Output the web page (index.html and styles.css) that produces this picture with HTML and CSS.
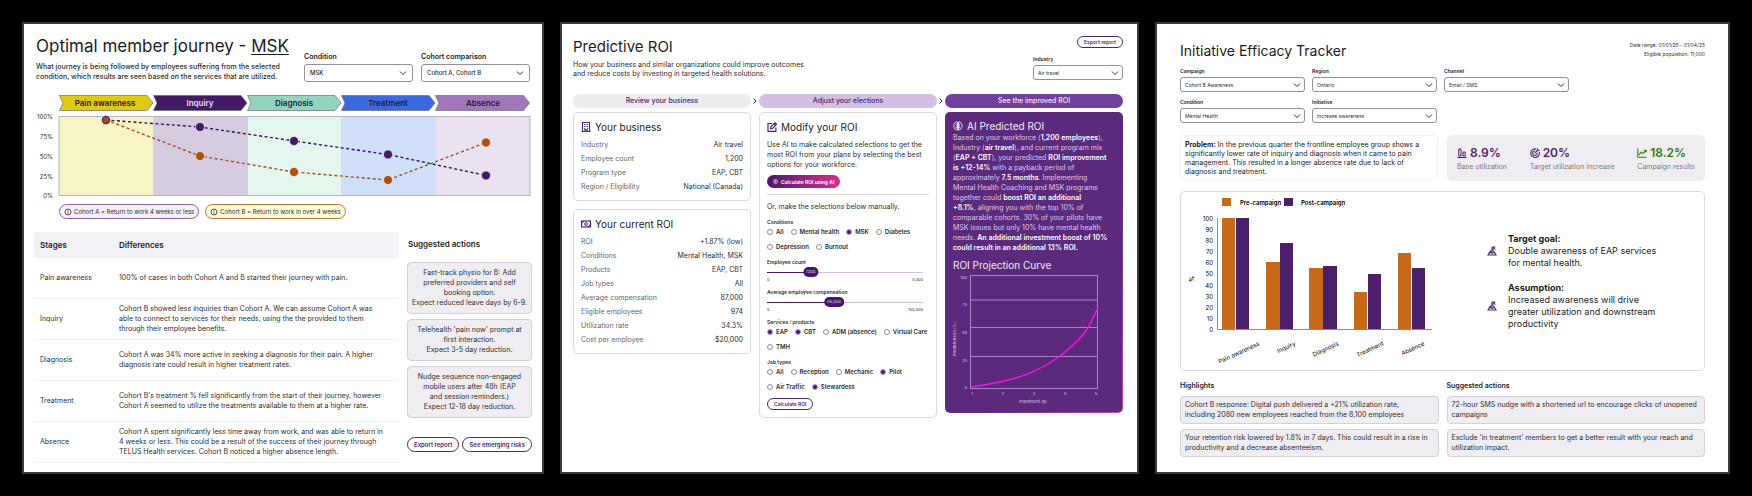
FILE: index.html
```html
<!DOCTYPE html>
<html lang="en">
<head>
  <meta charset="UTF-8">
  <title>Member health dashboards</title>
  <link rel="stylesheet" href="styles.css">
</head>
<body>
<svg class="defs" aria-hidden="true">
  <symbol id="chevron" viewBox="0 0 8 8"><path d="M1 2.5 4 5.5 7 2.5" fill="none" stroke="currentColor" stroke-width="1"/></symbol>
  <symbol id="next" viewBox="0 0 8 8"><path d="M2.5 1.5 5 4 2.5 6.5" fill="none" stroke="#333" stroke-width="1"/></symbol>
  <symbol id="info" viewBox="0 0 8 8"><circle cx="4" cy="4" r="3" fill="none" stroke="#2c2e30" stroke-width=".8"/><path d="M4 3.6V5.8M4 2.1V2.9" stroke="#2c2e30" stroke-width=".8"/></symbol>
  <symbol id="brain" viewBox="0 0 10 10"><path d="M4.4 1C3.4.6 2.6 1.1 2.4 2 1.3 2.2.9 3.2 1.2 4 .3 4.8.5 6.2 1.4 6.6 1.3 7.7 2.2 8.3 3 8.2 3.3 9 4 9.2 4.4 9ZM5.6 1C6.6.6 7.4 1.1 7.6 2 8.7 2.2 9.1 3.2 8.8 4 9.7 4.8 9.5 6.2 8.6 6.6 8.7 7.7 7.8 8.3 7 8.2 6.7 9 6 9.2 5.6 9ZM3 4h1M2.7 6.2H4M6 4h1M6 6.2h1.3" fill="none" stroke="currentColor" stroke-width="1"/></symbol>
  <symbol id="goal" viewBox="0 0 10 10"><path d="M1 9 3.4 5h3.2L9 9ZM5 5.2V1M5 1h2.6L6.8 2l.8 1H5M2.6 7.2l1.6-1 1 1.2 1.4-.9" fill="none" stroke="#4b286d" stroke-width="1.2"/></symbol>
</svg>
<main class="boards">

  <section class="board journey">
    <header class="journey-head">
      <div>
        <h1>Optimal member journey - <u>MSK</u></h1>
        <p>What journey is being followed by employees suffering from the selected<br>condition, which results are seen based on the services that are utilized.</p>
      </div>
      <div class="filters">
        <div class="field">
          <label for="j-condition">Condition</label>
          <div class="select"><select id="j-condition"><option>MSK</option></select><svg><use href="#chevron"/></svg></div>
        </div>
        <div class="field">
          <label for="j-cohort">Cohort comparison</label>
          <div class="select"><select id="j-cohort"><option>Cohort A, Cohort B</option></select><svg><use href="#chevron"/></svg></div>
        </div>
      </div>
    </header>

    <svg class="journey-chart" viewBox="0 0 498 106" role="img" aria-label="Cohort journey by stage">
      <g stroke="#6b6b70" stroke-width=".7">
        <path d="M25.5.5H113L119 8 113 15.5H25.5L29 8Z" fill="#e0c912"/>
        <path d="M119.5.5H207L213 8 207 15.5H119.5L123 8Z" fill="#421b64"/>
        <path d="M213.5.5H301L307 8 301 15.5H213.5L217 8Z" fill="#92d4bd"/>
        <path d="M307.5.5H395L401 8 395 15.5H307.5L311 8Z" fill="#3a6ade"/>
        <path d="M401.5.5H489.5L495.5 8 489.5 15.5H401.5L405 8Z" fill="#a077ba"/>
      </g>
      <g class="stage-names">
        <text x="71" y="11">Pain awareness</text>
        <text x="166" y="11" class="light">Inquiry</text>
        <text x="260" y="11">Diagnosis</text>
        <text x="354" y="11">Treatment</text>
        <text x="449" y="11">Absence</text>
      </g>
      <rect x="25" y="22" width="94" height="79" fill="#f7f5c5"/>
      <rect x="119" y="22" width="95" height="79" fill="#d6cce0"/>
      <rect x="214" y="22" width="93" height="79" fill="#e5f6ef"/>
      <rect x="307" y="22" width="95" height="79" fill="#cfe0f8"/>
      <rect x="402" y="22" width="94" height="79" fill="#eae2f0"/>
      <rect x="25" y="21.5" width="471" height="79" fill="none" stroke="#b4b4be"/>
      <g class="ticks">
        <text x="19" y="24">100%</text>
        <text x="19" y="44">75%</text>
        <text x="19" y="64">50%</text>
        <text x="19" y="84">25%</text>
        <text x="19" y="103">0%</text>
      </g>
      <g fill="none" stroke-width="1.4" stroke-dasharray="3 2.5">
        <path d="M72 25 166 32 260 46 354 59.5 452 80.5" stroke="#32145a"/>
        <path d="M72 25 166 61 260 77 354 85 452 47.5" stroke="#a2501c"/>
      </g>
      <g fill="#421b64" stroke="#fff" stroke-opacity=".6" stroke-width="1">
        <circle cx="72" cy="25" r="4.5"/><circle cx="166" cy="32" r="4.5"/><circle cx="260" cy="46" r="4.5"/><circle cx="354" cy="59.5" r="4.5"/><circle cx="452" cy="80.5" r="4.5"/>
      </g>
      <g fill="#b04f0c" stroke="#fff" stroke-opacity=".6" stroke-width="1">
        <circle cx="72" cy="25" r="3" stroke="none"/><circle cx="166" cy="61" r="4.5"/><circle cx="260" cy="77" r="4.5"/><circle cx="354" cy="85" r="4.5"/><circle cx="452" cy="47.5" r="4.5"/>
      </g>
    </svg>

    <div class="cohorts">
      <span class="cohort cohort-a"><svg><use href="#info"/></svg>Cohort A = Return to work 4 weeks or less</span>
      <span class="cohort cohort-b"><svg><use href="#info"/></svg>Cohort B = Return to work in over 4 weeks</span>
    </div>

    <div class="journey-body">
      <table class="stages">
        <thead>
          <tr><th>Stages</th><th>Differences</th></tr>
        </thead>
        <tbody>
          <tr><td>Pain awareness</td><td>100% of cases in both Cohort A and B started their journey with pain.</td></tr>
          <tr><td>Inquiry</td><td>Cohort B showed less inquiries than Cohort A. We can assume Cohort A was<br>able to connect to services for their needs, using the the provided to them<br>through their employee benefits.</td></tr>
          <tr><td>Diagnosis</td><td>Cohort A was 34% more active in seeking a diagnosis for their pain. A higher<br>diagnosis rate could result in higher treatment rates.</td></tr>
          <tr><td>Treatment</td><td>Cohort B's treatment % fell significantly from the start of their journey, however<br>Cohort A seemed to utilize the treatments available to them at a higher rate.</td></tr>
          <tr><td>Absence</td><td>Cohort A spent significantly less time away from work, and was able to return in<br>4 weeks or less. This could be a result of the success of their journey through<br>TELUS Health services. Cohort B noticed a higher absence length.</td></tr>
        </tbody>
      </table>
      <aside class="actions">
        <h2>Suggested actions</h2>
        <p class="note">Fast-track physio for B: Add<br>preferred providers and self<br>booking option.<br>Expect reduced leave days by 6-9.</p>
        <p class="note">Telehealth 'pain now' prompt at<br>first interaction.<br>Expect 3-5 day reduction.</p>
        <p class="note">Nudge sequence non-engaged<br>mobile users after 48h (EAP<br>and session reminders.)<br>Expect 12-18 day reduction.</p>
        <div class="buttons">
          <button class="btn">Export report</button>
          <button class="btn">See emerging risks</button>
        </div>
      </aside>
    </div>
  </section>

  <section class="board roi">
    <header class="roi-head">
      <div>
        <h1>Predictive ROI</h1>
        <p>How your business and similar organizations could improve outcomes<br>and reduce costs by investing in targeted health solutions.</p>
      </div>
      <div class="roi-tools">
        <button class="btn small">Export report</button>
        <div class="field compact">
          <label for="r-industry">Industry</label>
          <div class="select"><select id="r-industry"><option>Air travel</option></select><svg><use href="#chevron"/></svg></div>
        </div>
      </div>
    </header>

    <div class="steps">
      <span class="step step-1">Review your business</span>
      <svg><use href="#next"/></svg>
      <span class="step step-2">Adjust your elections</span>
      <svg><use href="#next"/></svg>
      <span class="step step-3">See the improved ROI</span>
    </div>

    <div class="roi-cols">
      <div class="stack">
        <div class="card">
          <h2><svg viewBox="0 0 10 10"><path d="M1.5 9.5V.5h7v9M.5 9.5h9M4 9.5V7.5h2v2" fill="none" stroke="#4b286d" stroke-width="1.2"/><path d="M3.5 2v1M5 2v1M6.5 2v1M3.5 4v1M5 4v1M6.5 4v1M3.5 6v1M6.5 6v1" stroke="#4b286d" stroke-width=".9"/></svg>Your business</h2>
          <dl>
            <div><dt>Industry</dt><dd>Air travel</dd></div>
            <div><dt>Employee count</dt><dd>1,200</dd></div>
            <div><dt>Program type</dt><dd>EAP, CBT</dd></div>
            <div><dt>Region / Eligibility</dt><dd>National (Canada)</dd></div>
          </dl>
        </div>
        <div class="card">
          <h2><svg viewBox="0 0 10 10"><rect x=".6" y="2" width="8.8" height="6" fill="none" stroke="#4b286d" stroke-width="1.2"/><circle cx="5" cy="5" r="1.4" fill="none" stroke="#4b286d"/><path d="M1 4.2 3 2M9 5.8 7 8" stroke="#4b286d"/></svg>Your current ROI</h2>
          <dl>
            <div><dt>ROI</dt><dd>+1.87% (low)</dd></div>
            <div><dt>Conditions</dt><dd>Mental Health, MSK</dd></div>
            <div><dt>Products</dt><dd>EAP, CBT</dd></div>
            <div><dt>Job types</dt><dd>All</dd></div>
            <div><dt>Average compensation</dt><dd>87,000</dd></div>
            <div><dt>Eligible employees</dt><dd>974</dd></div>
            <div><dt>Utilization rate</dt><dd>34.3%</dd></div>
            <div><dt>Cost per employee</dt><dd>$20,000</dd></div>
          </dl>
        </div>
      </div>

      <form class="card modify">
        <h2><svg viewBox="0 0 10 10"><path d="M5 1.5H1v7.9h7.9V5.5M3.6 6.8l.3-2L8 .8l1.5 1.5-4 4.1ZM7 1.8l1.4 1.4" fill="none" stroke="#4b286d" stroke-width="1.2"/></svg>Modify your ROI</h2>
        <p>Use AI to make calculated selections to get the<br>most ROI from your plans by selecting the best<br>options for your workforce.</p>
        <button type="button" class="ai-btn"><svg><use href="#brain"/></svg>Calculate ROI using AI</button>
        <hr>
        <p class="manual">Or, make the selections below manually.</p>
        <fieldset>
          <legend>Conditions</legend>
          <label><input type="radio" name="condition">All</label>
          <label><input type="radio" name="condition">Mental health</label>
          <label><input type="radio" name="condition" checked>MSK</label>
          <label><input type="radio" name="condition">Diabetes</label>
          <label><input type="radio" name="condition">Depression</label>
          <label><input type="radio" name="condition">Burnout</label>
        </fieldset>
        <div class="slider count">
          <label for="count">Employee count</label>
          <div class="track"><input id="count" type="range" min="0" max="5000" value="1200"><output for="count">1200</output></div>
          <div class="ends"><span>0</span><span>5,000</span></div>
        </div>
        <div class="slider pay">
          <label for="pay">Average employee compensation</label>
          <div class="track"><input id="pay" type="range" min="0" max="150000" value="65000"><output for="pay">65,000</output></div>
          <div class="ends"><span>0</span><span>150,000</span></div>
        </div>
        <fieldset>
          <legend>Services / products</legend>
          <label><input type="checkbox" checked>EAP</label>
          <label><input type="checkbox" checked>CBT</label>
          <label><input type="checkbox">ADM (absence)</label>
          <label><input type="checkbox">Virtual Care</label>
          <label><input type="checkbox">TMH</label>
        </fieldset>
        <fieldset>
          <legend>Job types</legend>
          <label><input type="checkbox">All</label>
          <label><input type="checkbox">Reception</label>
          <label><input type="checkbox">Mechanic</label>
          <label><input type="checkbox" checked>Pilot</label>
          <label><input type="checkbox">Air Traffic</label>
          <label><input type="checkbox" checked>Stewardess</label>
        </fieldset>
        <button type="button" class="btn small">Calculate ROI</button>
      </form>

      <div class="predicted">
        <h2><svg><use href="#brain"/></svg>AI Predicted ROI</h2>
        <p>Based on your workforce (<b>1,200 employees</b>),<br>Industry (<b>air travel</b>), and current program mix<br>(<b>EAP + CBT</b>), your predicted <b>ROI improvement<br>is +12-14%</b> with a payback period of<br>approximately <b>7.5 months</b>. Implementing<br>Mental Health Coaching and MSK programs<br>together could <b>boost ROI an additional<br>+8.1%</b>, aligning you with the top 10% of<br>comparable cohorts. 30% of your pilots have<br>MSK issues but only 10% have mental health<br>needs. <b>An additional investment boost of 10%<br>could result in an additional 13% ROI.</b></p>
        <h2>ROI Projection Curve</h2>
        <svg class="curve" viewBox="0 0 162 134" role="img" aria-label="ROI projection curve">
          <g fill="none" stroke="#a883c6" stroke-width="1">
            <rect x="17.5" y="3.5" width="127" height="113"/>
            <path d="M17.5 28H144.5M17.5 55.5H144.5M17.5 84.5H144.5"/>
          </g>
          <path d="M18 115C60 109 85 102 112 80S138 48 145 36" fill="none" stroke="#e815dd" stroke-width="1.6"/>
          <g class="curve-y">
            <text x="14" y="7">100</text>
            <text x="14" y="34">75</text>
            <text x="14" y="62">50</text>
            <text x="14" y="90">25</text>
            <text x="14" y="117">0</text>
          </g>
          <g class="curve-x">
            <text x="19" y="123">1</text>
            <text x="50" y="123">2</text>
            <text x="81" y="123">3</text>
            <text x="112" y="123">4</text>
            <text x="143" y="123">5</text>
            <text x="80" y="131">Investment ($)</text>
            <text transform="translate(3 67) rotate(-90)">Predicted ROI (%)</text>
          </g>
        </svg>
      </div>
    </div>
  </section>

  <section class="board tracker">
    <header class="tracker-head">
      <h1>Initiative Efficacy Tracker</h1>
      <p>Date range: 01/01/25 - 01/04/25<br>Eligible population: 11,000</p>
    </header>

    <div class="tracker-filters">
      <div class="field compact">
        <label for="t-campaign">Campaign</label>
        <div class="select"><select id="t-campaign"><option>Cohort B Awareness</option></select><svg><use href="#chevron"/></svg></div>
      </div>
      <div class="field compact">
        <label for="t-region">Region</label>
        <div class="select"><select id="t-region"><option>Ontario</option></select><svg><use href="#chevron"/></svg></div>
      </div>
      <div class="field compact">
        <label for="t-channel">Channel</label>
        <div class="select"><select id="t-channel"><option>Email / SMS</option></select><svg><use href="#chevron"/></svg></div>
      </div>
      <div class="field compact">
        <label for="t-condition">Condition</label>
        <div class="select"><select id="t-condition"><option>Mental Health</option></select><svg><use href="#chevron"/></svg></div>
      </div>
      <div class="field compact">
        <label for="t-initiative">Initiative</label>
        <div class="select"><select id="t-initiative"><option>Increase awareness</option></select><svg><use href="#chevron"/></svg></div>
      </div>
    </div>

    <div class="summary">
      <p class="problem"><b>Problem:</b> In the previous quarter the frontline employee group shows a<br>significantly lower rate of inquiry and diagnosis when it came to pain<br>management. This resulted in a longer absence rate due to lack of<br>diagnosis and treatment.</p>
      <div class="stats">
        <div class="stat"><strong><svg viewBox="0 0 10 10"><path d="M.5 9.5h9M1.8 8V1h2.2v7ZM6 8V4h2.2v4Z" fill="none" stroke="currentColor"/></svg>8.9%</strong><span>Base utilization</span></div>
        <div class="stat"><strong><svg viewBox="0 0 10 10"><path d="M9.2 4A4.3 4.3 0 1 1 6.2 1M7 4.8A2.2 2.2 0 1 1 5 3M4.8 5.2 8 2M7.5.5v2h2" fill="none" stroke="currentColor" stroke-width="1.1"/></svg>20%</strong><span>Target utilization increase</span></div>
        <div class="stat up"><strong><svg viewBox="0 0 10 10"><path d="M.8.5v8.7h8.7M2 7l2.2-3 1.6 1.6L9 2.5M6.8 2.2h2.4v2.4" fill="none" stroke="currentColor" stroke-width="1.1"/></svg>18.2%</strong><span>Campaign results</span></div>
      </div>
    </div>

    <div class="results">
      <svg class="bars" viewBox="0 2 257 178" role="img" aria-label="Pre-campaign and post-campaign results by stage">
        <g fill="#c66a1a">
          <rect x="41" y="8" width="9" height="8"/>
          <rect x="41" y="28" width="13" height="111"/>
          <rect x="85" y="72" width="14" height="67"/>
          <rect x="128" y="78" width="14" height="61"/>
          <rect x="173" y="102" width="13" height="37"/>
          <rect x="217" y="63" width="13" height="76"/>
        </g>
        <g fill="#4b1f69">
          <rect x="103" y="8" width="9" height="8"/>
          <rect x="55" y="28" width="13" height="111"/>
          <rect x="99" y="53" width="13" height="86"/>
          <rect x="142" y="76" width="14" height="63"/>
          <rect x="187" y="84" width="13" height="55"/>
          <rect x="231" y="78" width="13" height="61"/>
        </g>
        <path d="M36.5 28V139.5H251" fill="none" stroke="#8b8b90" stroke-width="1"/>
        <g class="legend">
          <text x="59" y="15">Pre-campaign</text>
          <text x="120" y="15">Post-campaign</text>
        </g>
        <g class="bar-ticks">
          <text x="32" y="31">100</text>
          <text x="32" y="42">90</text>
          <text x="32" y="53">80</text>
          <text x="32" y="64">70</text>
          <text x="32" y="75">60</text>
          <text x="32" y="86">50</text>
          <text x="32" y="98">40</text>
          <text x="32" y="109">30</text>
          <text x="32" y="120">20</text>
          <text x="32" y="131">10</text>
          <text x="32" y="142">0</text>
          <text class="unit" transform="translate(13 86) rotate(-90)">%</text>
          <text transform="translate(79 155) rotate(-25)">Pain awareness</text>
          <text transform="translate(115 155) rotate(-25)">Inquiry</text>
          <text transform="translate(158 155) rotate(-25)">Diagnosis</text>
          <text transform="translate(203 155) rotate(-25)">Treatment</text>
          <text transform="translate(244 155) rotate(-25)">Absence</text>
        </g>
      </svg>
      <div class="insights">
        <div class="insight"><svg><use href="#goal"/></svg><p><b>Target goal:</b><br>Double awareness of EAP services<br>for mental health.</p></div>
        <div class="insight"><svg><use href="#goal"/></svg><p><b>Assumption:</b><br>Increased awareness will drive<br>greater utilization and downstream<br>productivity</p></div>
      </div>
    </div>

    <div class="takeaways">
      <h2>Highlights</h2>
      <h2>Suggested actions</h2>
      <p class="note">Cohort B response: Digital push delivered a +21% utilization rate,<br>including 2080 new employees reached from the 8,100 employees</p>
      <p class="note">72-hour SMS nudge with a shortened url to encourage clicks of unopened<br>campaigns</p>
      <p class="note">Your retention risk lowered by 1.8% in 7 days. This could result in a rise in<br>productivity and a decrease absenteeism.</p>
      <p class="note">Exclude 'in treatment' members to get a better result with your reach and<br>utilization impact.</p>
    </div>
  </section>

</main>
</body>
</html>
```
FILE: styles.css
```css
* { box-sizing: border-box; }
body { margin: 0; background: #000; color: #2c2e30; font: 7px/10px Inter, "Liberation Sans", sans-serif; }
h1, h2, p, dl, dd, fieldset { margin: 0; padding: 0; }
h1, h2 { font-weight: 400; color: #1c1c1e; }
svg { display: block; }
.defs { position: absolute; width: 0; height: 0; }
input, select, button { font: inherit; color: inherit; }

.boards { display: grid; grid-template-columns: 522fr 579fr 575fr; gap: 16px; min-height: 100vh; padding: 22px; }
.board { min-width: 0; background: #fff; border: 2px solid #3a3a3a; }

/* form fields */
.field label { display: block; font-weight: 600; color: #1c1c1e; }
.select { display: grid; margin-top: 2px; }
.select select { grid-area: 1 / 1; width: 100%; height: 18px; padding: 0 5px; appearance: none; background: #fff; border: 1px solid #919197; border-radius: 3px; font-size: 6px; font-weight: 500; }
.select svg { grid-area: 1 / 1; justify-self: end; align-self: center; width: 8px; height: 8px; margin-right: 6px; pointer-events: none; }
.compact label { font-size: 5px; line-height: 8px; }
.compact .select select { height: 15px; font-size: 5px; font-weight: 400; padding: 0 4px; }
.compact .select svg { margin-right: 4px; }

.btn { height: 15px; padding: 0 6px; background: #fff; border: 1px solid #4b286d; border-radius: 8px; color: #4b286d; font-size: 6px; font-weight: 600; line-height: 12px; white-space: nowrap; }
.btn.small { height: 12px; font-size: 5px; line-height: 10px; }
.note { padding: 5px 4px; background: #f0edf2; border: 1px solid #d5d0da; border-radius: 4px; white-space: nowrap; }

/* journey */
.journey { padding: 11px 10px 0; }
.journey-head { display: flex; justify-content: space-between; padding: 0 2px; white-space: nowrap; }
.journey-head h1 { font-size: 17px; line-height: 22px; }
.journey-head p { margin-top: 5px; font-weight: 500; }
.journey-head u { text-underline-offset: 2px; text-decoration-thickness: 1px; }
.filters { display: grid; grid-template-columns: 109px 109px; gap: 8px; align-self: start; padding-top: 17px; }
.journey-chart { width: 100%; margin-top: 13px; }
.stage-names { font-size: 8px; font-weight: 600; fill: #2a1640; text-anchor: middle; }
.stage-names .light { fill: #e8dcf2; }
.ticks { font-size: 6px; fill: #2c2e30; text-anchor: end; }
.cohorts { display: flex; gap: 6px; margin: 3px 0 13px 25px; }
.cohort { display: flex; align-items: center; gap: 2px; height: 15px; padding: 0 4px; border: 1px solid #8a63ab; border-radius: 8px; background: #f4eff8; font-size: 6px; }
.cohort svg { width: 8px; height: 8px; }
.cohort-b { border-color: #b9773a; background: #fffbd9; }
.journey-body { display: grid; grid-template-columns: minmax(0, 365fr) minmax(0, 125fr); gap: 8px; align-items: start; }
.stages { width: 100%; border-collapse: separate; border-spacing: 0; table-layout: fixed; }
.stages th { height: 26px; padding: 0 6px; background: #f2f1f6; font-size: 8px; font-weight: 600; text-align: left; color: #1c1c1e; }
.stages td { height: 41px; padding: 0 6px; border-bottom: 1px solid #f0f0f3; white-space: nowrap; }
.stages th:first-child { width: 79px; }
.actions { display: flex; flex-direction: column; gap: 5px; }
.actions h2 { padding-left: 1px; font-size: 8px; font-weight: 600; line-height: 25px; }
.actions .note { padding: 5px 2px; text-align: center; }
.buttons { display: flex; justify-content: space-between; margin-top: 14px; }

/* predictive roi */
.roi { padding: 12px 14px 0 11px; }
.roi-head { display: flex; justify-content: space-between; height: 58px; }
.roi-head h1 { font-size: 15px; line-height: 22px; }
.roi-head p { margin-top: 2px; line-height: 9px; }
.roi-tools { display: flex; flex-direction: column; align-items: end; gap: 7px; width: 90px; }
.roi-tools .field { width: 100%; }
.steps { display: flex; align-items: center; }
.steps svg { flex: none; width: 8px; height: 8px; }
.step { flex: 1; border-radius: 7px; line-height: 14px; text-align: center; font-weight: 500; }
.step-1 { background: #eeebf1; color: #4b286d; }
.step-2 { background: #d2bfe2; color: #4b286d; }
.step-3 { background: #70419a; color: #f0e6f8; }
.roi-cols { display: grid; grid-template-columns: 1fr 1fr 1fr; gap: 8px; align-items: start; margin-top: 4px; }
.stack { display: grid; gap: 8px; }
.card { padding: 7px; border: 1px solid #dcdce0; border-radius: 5px; min-width: 0; }
.stack .card { padding-bottom: 6px; }
.card h2, .predicted h2 { display: flex; align-items: center; gap: 4px; font-size: 10px; line-height: 14px; }
.card h2 svg, .predicted h2 svg { width: 10px; height: 10px; }
.card dl { margin-top: 4px; }
.card dl div { display: flex; justify-content: space-between; line-height: 14px; }
.card dt { color: #66666b; }
.modify p { margin-top: 6px; white-space: nowrap; }
.ai-btn { display: flex; align-items: center; gap: 3px; height: 13px; margin-top: 5px; padding: 0 6px; border: 0; border-radius: 7px; background: linear-gradient(90deg, #4b1a6b, #d4308b); color: #fff; font-size: 5px; font-weight: 600; }
.ai-btn svg { width: 5px; height: 5px; }
.modify hr { margin: 6px 0 0; border: 0; border-top: 1px solid #dcdce0; }
.modify .manual { margin: 7px 0 6px; }
.modify fieldset { display: flex; flex-wrap: wrap; gap: 5px 7px; border: 0; margin: 0 -4px 6px 0; font-size: 6px; font-weight: 600; white-space: nowrap; }
.modify legend { padding: 0 0 1px; font-size: 5px; line-height: 8px; }
.modify fieldset label { display: flex; align-items: center; gap: 3px; line-height: 10px; }
.modify fieldset input { width: 6px; height: 6px; margin: 0; appearance: none; border: 1px solid #8e8e93; border-radius: 50%; background: #fff; }
.modify fieldset input:checked { border-color: #b9a0d0; background: #4b1a6b; }
.slider { padding: 0 6px 6px 0; }
.slider label { display: block; font-size: 5px; font-weight: 600; line-height: 8px; }
.track { position: relative; display: flex; align-items: center; height: 12px; }
.track input { width: 100%; height: 1px; margin: 0; appearance: none; background: #d2bfe2; }
.track input::-webkit-slider-thumb { appearance: none; width: 14px; height: 10px; opacity: 0; }
.track output { position: absolute; padding: 0 3px; border-radius: 5px; background: #421b64; color: #e4d5f0; font-size: 4px; line-height: 10px; transform: translateX(-50%); }
.count .track input { background: linear-gradient(90deg, #421b64 28%, #d2bfe2 28%); }
.count output { left: 28%; }
.pay .track input { background: linear-gradient(90deg, #421b64 43%, #d2bfe2 43%); }
.pay output { left: 43%; }
.ends { display: flex; justify-content: space-between; font-size: 4px; line-height: 4px; }
.predicted { padding: 6px 7px; border: 1px solid transparent; border-radius: 5px; background: linear-gradient(#5b2a7c, #5b2a7c) padding-box, linear-gradient(120deg, #5b2a7c 60%, #e0409a) border-box; color: #dccbe9; }
.predicted h2 { color: #f3eaf9; }
.predicted p { margin-bottom: 5px; white-space: nowrap; }
.predicted b { color: #fff; font-weight: 600; }
.curve { width: 100%; }
.curve text { font-size: 4px; fill: #dccbe9; }
.curve-y { text-anchor: end; }
.curve-x { text-anchor: middle; }

/* efficacy tracker */
.tracker { padding: 16px 23px 0; }
.tracker-head { display: flex; justify-content: space-between; }
.tracker-head h1 { font-size: 14px; line-height: 22px; }
.tracker-head p { padding-top: 1px; font-size: 5px; line-height: 9px; text-align: right; }
.tracker-filters { display: grid; grid-template-columns: repeat(3, 125px); gap: 6px 7px; margin: 5px 0 12px; }
.summary { display: grid; grid-template-columns: 1fr 1fr; gap: 9px; }
.problem { padding: 4px; border: 1px solid #f2f2f4; border-radius: 3px; color: #1c1c1e; line-height: 9px; white-space: nowrap; }
.stats { display: flex; justify-content: space-between; align-items: center; padding: 0 10px; background: #f0edf2; border-radius: 5px; }
.stat { color: #77777c; }
.stat strong { display: flex; align-items: center; gap: 3px; color: #4b1f69; font-size: 12px; font-weight: 600; line-height: 18px; }
.stat.up strong { color: #2b8000; }
.stat svg { width: 10px; height: 10px; }
.results { display: grid; grid-template-columns: 257fr 266fr; margin: 10px 0; border: 1px solid #dcdce0; border-radius: 5px; }
.bars { width: 100%; }
.legend { font-size: 6px; font-weight: 600; }
.bar-ticks { font-size: 6px; text-anchor: end; }
.bar-ticks .unit { font-weight: 600; }
.insights { display: flex; flex-direction: column; justify-content: center; gap: 13px; padding-left: 49px; font-size: 9px; line-height: 12px; color: #1c1c1e; }
.insight { display: flex; align-items: center; gap: 11px; }
.insight svg { width: 10px; height: 10px; flex: none; }
.takeaways { display: grid; grid-template-columns: 1fr 1fr; gap: 5px 8px; }
.takeaways h2 { font-size: 7px; font-weight: 600; }
.takeaways .note { padding: 3px 4px; }
```
